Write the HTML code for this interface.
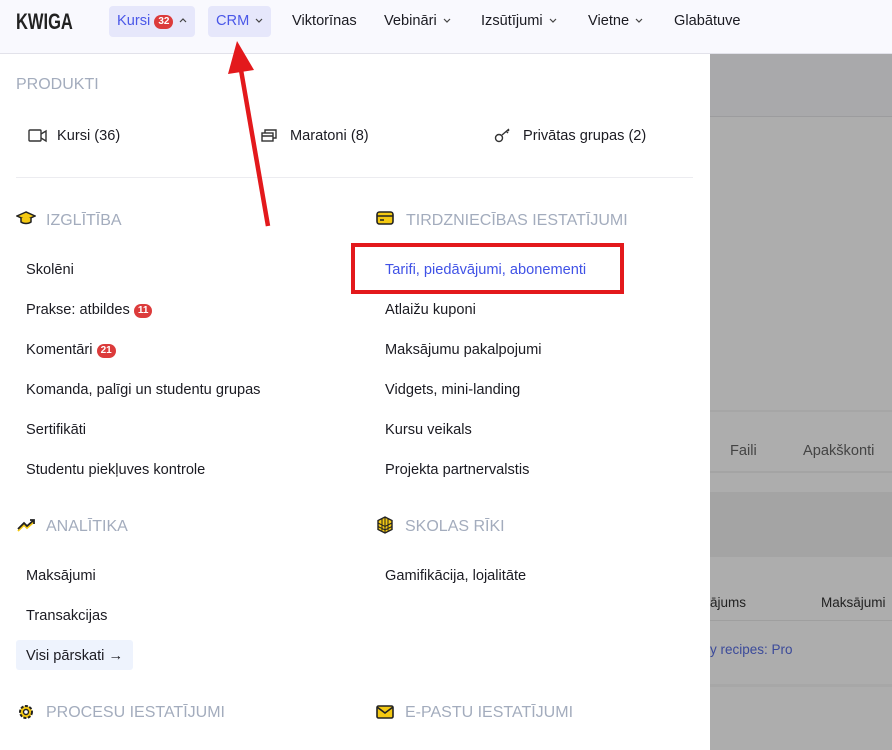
<!DOCTYPE html>
<html><head><meta charset="utf-8"><style>
*{margin:0;padding:0;box-sizing:border-box}
body{width:892px;height:750px;overflow:hidden;position:relative;background:#fff;font-family:"Liberation Sans",sans-serif;color:#1b1b22;font-size:14px}
.top{position:absolute;left:0;top:0;width:892px;height:54px;background:#f9f9fe;border-bottom:1px solid #e2e2ea}
.logo{position:absolute;left:16px;top:9px;font-weight:bold;font-size:22px;letter-spacing:0;transform:scaleX(0.75);transform-origin:left;color:#222}
.nav{position:absolute;top:6px;height:31px;line-height:31px;font-size:14.6px;padding:0 8px;border-radius:4px}
.act{background:#e6e7fb;color:#4a57e8}
.chev{display:inline-block;width:8px;height:5px;margin-left:6px;vertical-align:2px}
.badge{display:inline-block;background:#dc3b3b;color:#fff;font-size:10px;font-weight:bold;border-radius:8px;padding:0 4px;line-height:14px;height:14px;vertical-align:1px}
.ov{position:absolute;left:710px;top:54px;width:182px;height:696px;background:#adadad}
.t{position:absolute;white-space:nowrap}
.h{font-size:16px;color:#a3acbd}
.i{font-size:14.6px}
.sep{position:absolute;left:16px;top:177px;width:677px;height:1px;background:#ececf0}
</style></head><body>
<div class="top">
<div class="logo">KWIGA</div>
<div class="nav act" style="left:109px">Kursi <span class="badge">32</span><svg class="chev" viewBox="0 0 8 5"><path d="M1 4l3-3 3 3" fill="none" stroke="#444" stroke-width="1.2"/></svg></div>
<div class="nav act" style="left:208px">CRM<svg class="chev" viewBox="0 0 8 5"><path d="M1 1l3 3 3-3" fill="none" stroke="#444" stroke-width="1.2"/></svg></div>
<div class="nav" style="left:284px">Viktorīnas</div>
<div class="nav" style="left:376px">Vebināri<svg class="chev" viewBox="0 0 8 5"><path d="M1 1l3 3 3-3" fill="none" stroke="#444" stroke-width="1.2"/></svg></div>
<div class="nav" style="left:473px">Izsūtījumi<svg class="chev" viewBox="0 0 8 5"><path d="M1 1l3 3 3-3" fill="none" stroke="#444" stroke-width="1.2"/></svg></div>
<div class="nav" style="left:580px">Vietne<svg class="chev" viewBox="0 0 8 5"><path d="M1 1l3 3 3-3" fill="none" stroke="#444" stroke-width="1.2"/></svg></div>
<div class="nav" style="left:666px">Glabātuve</div>
</div>

<div class="ov">
<div style="position:absolute;left:0;top:0;width:182px;height:63px;background:#a9a9ab;border-bottom:1px solid #9c9c9e"></div>
<div style="position:absolute;left:0;top:356px;width:182px;height:2px;background:#a6a6a6"></div>
<div style="position:absolute;left:0;top:417px;width:182px;height:2px;background:#a4a4a4"></div>
<div class="t" style="left:20px;top:389px;color:#444;font-size:14.6px">Faili</div>
<div class="t" style="left:93px;top:389px;color:#444;font-size:14.6px">Apakškonti</div>
<div style="position:absolute;left:0;top:438px;width:182px;height:65px;background:#a4a4a4"></div>
<div class="t" style="left:0;top:541px;color:#222;font-size:13.5px">ājums</div>
<div class="t" style="left:111px;top:541px;color:#222;font-size:13.5px">Maksājumi</div>
<div style="position:absolute;left:0;top:566px;width:182px;height:1px;background:#9f9f9f"></div>
<div class="t" style="left:0;top:588px;color:#3b4a9a;font-size:13.5px">y recipes: Pro</div>
<div style="position:absolute;left:0;top:630px;width:182px;height:3px;background:#a7a7a7"></div>
</div>

<div class="t h" style="left:16px;top:76px">PRODUKTI</div>
<svg class="t" style="left:28px;top:128px" width="20" height="16" viewBox="0 0 20 16" fill="none" stroke="#333" stroke-width="1.4"><rect x="1" y="2" width="12" height="11" rx="1"/><path d="M13 6l5-3v10l-5-3"/></svg>
<div class="t i" style="left:57px;top:128px">Kursi (36)</div>
<svg class="t" style="left:261px;top:127px" width="18" height="16" viewBox="0 0 18 16" fill="none" stroke="#333" stroke-width="1.4"><rect x="1" y="6" width="11" height="8"/><path d="M4 6V3h11v8h-3M1 9h11"/></svg>
<div class="t i" style="left:290px;top:128px">Maratoni (8)</div>
<svg class="t" style="left:494px;top:127px" width="18" height="16" viewBox="0 0 18 16" fill="none" stroke="#333" stroke-width="1.4"><circle cx="5" cy="11" r="3.5"/><path d="M8 8l7-6M12 4l2 2M14 3l1 1"/></svg>
<div class="t i" style="left:523px;top:128px">Privātas grupas (2)</div>
<div class="sep"></div>

<svg class="t" style="left:16px;top:210px" width="20" height="16" viewBox="0 0 20 16"><path d="M10 2L1 6l9 4 9-4z" fill="#f4c912" stroke="#222" stroke-width="1.5"/><path d="M5 8v4c3 2 7 2 10 0V8" fill="#f4c912" stroke="#222" stroke-width="1.5"/></svg>
<div class="t h" style="left:46px;top:212px">IZGLĪTĪBA</div>
<div class="t i" style="left:26px;top:262px">Skolēni</div>
<div class="t i" style="left:26px;top:302px">Prakse: atbildes <span class="badge">11</span></div>
<div class="t i" style="left:26px;top:342px">Komentāri <span class="badge">21</span></div>
<div class="t i" style="left:26px;top:382px">Komanda, palīgi un studentu grupas</div>
<div class="t i" style="left:26px;top:422px">Sertifikāti</div>
<div class="t i" style="left:26px;top:462px">Studentu piekļuves kontrole</div>

<svg class="t" style="left:376px;top:211px" width="18" height="14" viewBox="0 0 18 14"><rect x="1" y="1" width="16" height="12" rx="2.5" fill="#f4c912" stroke="#222" stroke-width="1.6"/><path d="M1 5h16M4 9h4" stroke="#222" stroke-width="1.6"/></svg>
<div class="t h" style="left:406px;top:212px">TIRDZNIECĪBAS IESTATĪJUMI</div>
<div class="t i" style="left:385px;top:262px;color:#4052e6">Tarifi, piedāvājumi, abonementi</div>
<div style="position:absolute;left:351px;top:243px;width:273px;height:51px;border:4px solid #e3191c"></div>
<div class="t i" style="left:385px;top:302px">Atlaižu kuponi</div>
<div class="t i" style="left:385px;top:342px">Maksājumu pakalpojumi</div>
<div class="t i" style="left:385px;top:382px">Vidgets, mini-landing</div>
<div class="t i" style="left:385px;top:422px">Kursu veikals</div>
<div class="t i" style="left:385px;top:462px">Projekta partnervalstis</div>

<svg class="t" style="left:17px;top:518px" width="20" height="14" viewBox="0 0 20 14" fill="none" stroke-width="1.8"><path d="M1 12l6-6 3 3 7-6" stroke="#f4c912" transform="translate(0,1)"/><path d="M1 11l6-6 3 3 7-6M13 2h4v4" stroke="#222"/></svg>
<div class="t h" style="left:46px;top:518px">ANALĪTIKA</div>
<div class="t i" style="left:26px;top:568px">Maksājumi</div>
<div class="t i" style="left:26px;top:608px">Transakcijas</div>
<div style="position:absolute;left:16px;top:640px;width:117px;height:30px;background:#eef3fd;border-radius:3px"></div>
<div class="t i" style="left:26px;top:648px">Visi pārskati →</div>

<svg class="t" style="left:376px;top:516px" width="18" height="18" viewBox="0 0 18 18"><path d="M9 1l7 3.5v9L9 17l-7-3.5v-9z" fill="#f4c912" stroke="#222" stroke-width="1.4"/><path d="M2 7l7 3.5L16 7M2 10.5L9 14l7-3.5M6 2.5v12M12 2.5v12M9 1v16" stroke="#222" stroke-width="1" fill="none"/></svg>
<div class="t h" style="left:405px;top:518px">SKOLAS RĪKI</div>
<div class="t i" style="left:385px;top:568px">Gamifikācija, lojalitāte</div>

<svg class="t" style="left:17px;top:703px" width="18" height="18" viewBox="0 0 18 18"><circle cx="9" cy="9" r="6" fill="#f4c912" stroke="#222" stroke-width="2" stroke-dasharray="3 1.5"/><circle cx="9" cy="9" r="2.5" fill="#fff" stroke="#222" stroke-width="1.4"/></svg>
<div class="t h" style="left:46px;top:704px">PROCESU IESTATĪJUMI</div>
<svg class="t" style="left:376px;top:705px" width="18" height="14" viewBox="0 0 18 14"><rect x="1" y="1" width="16" height="12" rx="1.5" fill="#f4c912" stroke="#222" stroke-width="1.6"/><path d="M1 2l8 6 8-6" fill="none" stroke="#222" stroke-width="1.6"/></svg>
<div class="t h" style="left:405px;top:704px">E-PASTU IESTATĪJUMI</div>

<svg style="position:absolute;left:0;top:0" width="892" height="750"><path d="M268 226L241 70" stroke="#e3191c" stroke-width="4.5"/><path d="M228 74l9-33 17 29z" fill="#e3191c"/></svg>
</body></html>
